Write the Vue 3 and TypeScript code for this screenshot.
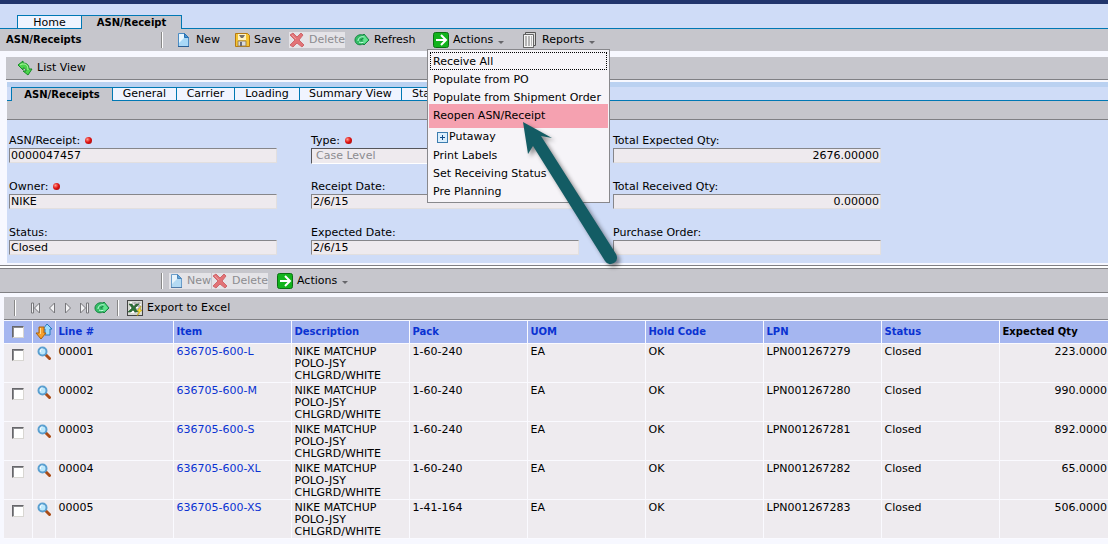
<script setup lang="ts">
import { ref } from 'vue'
import type { FunctionalComponent } from 'vue'
import { h } from 'vue'

interface Line {
  no: string
  item: string
  pack: string
  lpn: string
  qty: string
}

const lines: Line[] = [
  { no: '00001', item: '636705-600-L', pack: '1-60-240', lpn: 'LPN001267279', qty: '223.0000' },
  { no: '00002', item: '636705-600-M', pack: '1-60-240', lpn: 'LPN001267280', qty: '990.0000' },
  { no: '00003', item: '636705-600-S', pack: '1-60-240', lpn: 'LPN001267281', qty: '892.0000' },
  { no: '00004', item: '636705-600-XL', pack: '1-60-240', lpn: 'LPN001267282', qty: '65.0000' },
  { no: '00005', item: '636705-600-XS', pack: '1-41-164', lpn: 'LPN001267283', qty: '506.0000' },
]

const columns = ['Line #', 'Item', 'Description', 'Pack', 'UOM', 'Hold Code', 'LPN', 'Status']
const subTabs = ['General', 'Carrier', 'Loading', 'Summary View', 'Sta']
const selected = ref<string[]>([])

const svg = (size: number, kids: [string, Record<string, string | number>][]) =>
  h('svg', { width: size, height: size, viewBox: '0 0 16 16', 'aria-hidden': 'true' }, kids.map(([t, a]) => h(t, a)))

const NewIcon: FunctionalComponent = () =>
  svg(16, [
    ['path', { d: 'M2.5 1.5h6l4 4v9h-10z', fill: '#a9d8f6', stroke: '#4b8cc4' }],
    ['path', { d: 'M3 2h5v4l-5 5z', fill: '#e9f7ff' }],
    ['path', { d: 'M8.5 1.5v4h4z', fill: '#3f97d8', stroke: '#2b70b0' }],
    ['path', { d: 'M2 14.5h11', stroke: '#2a5f96' }],
  ])
const DeleteIcon: FunctionalComponent = () =>
  svg(16, [
    ['path', { d: 'M1 3l3-2 4 4 4-4 2 2-4 5 5 5-2 2-5-4-4 4-3-2 5-5z', fill: '#e2585c', stroke: '#c9494e', 'stroke-width': 1 }],
    ['path', { d: 'M3 3l4 4', stroke: '#ee8c8c', 'stroke-width': 1 }],
  ])
const RefreshIcon: FunctionalComponent = () =>
  svg(16, [
    ['path', { d: 'M1 8c0-4 4-6 8-5l1-1 5 6-5 5-1-1c-4 2-8 0-8-4z', fill: '#35bd67', stroke: '#168341' }],
    ['path', { d: 'M4 9c0-3 3-5 6-4M5 10c2 1 4 1 6-1', fill: 'none', stroke: '#c5ffe0', 'stroke-width': 1 }],
    ['path', { d: 'M6 8l3-2v3z', fill: '#0f7037' }],
    ['path', { d: 'M10 3l4 5-4 4V9L7 8l3-1z', fill: '#61e48f' }],
  ])
const GoIcon: FunctionalComponent = () =>
  svg(16, [
    ['rect', { x: 0.5, y: 0.5, width: 15, height: 15, rx: 2, fill: '#12b31c', stroke: '#0a6f12' }],
    ['path', { d: 'M3 8h10M8 3l5 5-5 5', fill: 'none', stroke: '#fff', 'stroke-width': 2 }],
  ])
</script>

<template>
  <div class="page">
    <header class="main-tabs">
      <button class="tab home">Home</button>
      <button class="tab current">ASN/Receipt</button>
    </header>

    <div class="toolbar">
      <h1>ASN/Receipts</h1>
      <span class="sep"></span>
      <button class="tool new"><NewIcon />New</button>
      <button class="tool save">
        <svg width="16" height="16" viewBox="0 0 16 16" aria-hidden="true">
          <path d="M1.500 1.500h12l2 2v11h-14z" fill="#f4c331" stroke="#b57a13" />
          <path d="M4 2h8v6H4z" fill="#fff3c2" />
          <path d="M5 3h6l-2 3H7z" fill="#76716b" />
          <path d="M4 9h8v5H4z" fill="#d9dbe0" stroke="#9f8551" />
          <path d="M6 10h2v4H6z" fill="#6a6b78" />
        </svg>Save
      </button>
      <button class="tool del" disabled><DeleteIcon />Delete</button>
      <button class="tool refresh"><RefreshIcon />Refresh</button>
      <div class="actions">
        <button class="tool"><GoIcon />Actions<i class="caret"></i></button>
        <ul class="menu">
          <li class="focused"><button>Receive All</button></li>
          <li><button>Populate from PO</button></li>
          <li class="short"><button>Populate from Shipment Order</button></li>
          <li class="hot"><button>Reopen ASN/Receipt</button></li>
          <li class="nested">
            <button>
              <svg width="11" height="11" viewBox="0 0 11 11" aria-hidden="true">
                <rect x=".5" y=".5" width="10" height="10" fill="#dceffd" stroke="#3d7daf" />
                <path d="M3 5.500h5M5.500 3v5" stroke="#124d8b" />
              </svg>Putaway
            </button>
          </li>
          <li><button>Print Labels</button></li>
          <li><button>Set Receiving Status</button></li>
          <li><button>Pre Planning</button></li>
        </ul>
      </div>
      <button class="tool reports">
        <svg width="16" height="16" viewBox="0 0 16 16" aria-hidden="true">
          <path d="M3.500 .5h10v13h-2v2h-10v-13h2z" fill="#dadada" stroke="#555" />
          <path d="M1.500 2.500h10v13h-10z" fill="#f4f4f4" stroke="#666" />
          <path d="M3 5h7M3 7h7M3 9h7M3 11h7M3 13h7" stroke="#777" stroke-dasharray="2 1" />
        </svg>Reports<i class="caret"></i>
      </button>
    </div>

    <section class="detail">
      <div class="list-bar">
        <button class="tool">
          <svg width="16" height="16" viewBox="0 0 16 16" aria-hidden="true">
            <path d="M1 5l5-4v2c4 0 6 2 6 6h3l-4 6-5-4h3c0-2-1-3-3-3v2z" fill="#4bd34b" stroke="#168b25" />
            <path d="M3 5l2-1h2c3 0 4 3 4 6" fill="none" stroke="#b1f6a4" />
          </svg>List View
        </button>
      </div>
      <div class="panel">
        <nav class="sub-tabs">
          <button class="tab current">ASN/Receipts</button>
          <button v-for="(t, i) in subTabs" :key="t" class="tab" :class="'t' + i">{{ t }}</button>
        </nav>
        <div class="sub-bar"></div>
        <form class="fields" @submit.prevent>
          <div class="field">
            <label for="asn">ASN/Receipt:<i class="req"></i></label>
            <input id="asn" value="0000047457" readonly />
          </div>
          <div class="field">
            <label for="type">Type:<i class="req"></i></label>
            <select id="type" disabled><option>Case Level</option></select>
          </div>
          <div class="field">
            <label for="teq">Total Expected Qty:</label>
            <input id="teq" class="num" value="2676.00000" readonly />
          </div>
          <div class="field">
            <label for="owner">Owner:<i class="req"></i></label>
            <input id="owner" value="NIKE" readonly />
          </div>
          <div class="field">
            <label for="rdate">Receipt Date:</label>
            <input id="rdate" value="2/6/15" readonly />
          </div>
          <div class="field">
            <label for="trq">Total Received Qty:</label>
            <input id="trq" class="num" value="0.00000" readonly />
          </div>
          <div class="field">
            <label for="status">Status:</label>
            <input id="status" value="Closed" readonly />
          </div>
          <div class="field">
            <label for="edate">Expected Date:</label>
            <input id="edate" value="2/6/15" readonly />
          </div>
          <div class="field">
            <label for="po">Purchase Order:</label>
            <input id="po" value="" readonly />
          </div>
        </form>
      </div>
    </section>

    <div class="splitter"></div>

    <div class="toolbar lower">
      <span class="sep"></span>
      <button class="tool new" disabled><NewIcon />New</button>
      <button class="tool del" disabled><DeleteIcon />Delete</button>
      <button class="tool go"><GoIcon />Actions<i class="caret"></i></button>
    </div>

    <section class="grid">
      <div class="grid-bar">
        <span class="sep"></span>
        <div class="pager">
          <button aria-label="First page">
            <svg width="12" height="12" viewBox="0 0 12 12"><path d="M1.500 1v10h2V1zM9.500 1v10L4.500 6z" fill="#f2f2f4" stroke="#77777b" /></svg>
          </button>
          <button aria-label="Previous page">
            <svg width="12" height="12" viewBox="0 0 12 12"><path d="M8.500 1v10L3.500 6z" fill="#f2f2f4" stroke="#77777b" /></svg>
          </button>
          <button aria-label="Next page">
            <svg width="12" height="12" viewBox="0 0 12 12"><path d="M3.500 1v10l5-5z" fill="#f2f2f4" stroke="#77777b" /></svg>
          </button>
          <button aria-label="Last page">
            <svg width="12" height="12" viewBox="0 0 12 12"><path d="M8.500 1v10h2V1zM2.500 1v10l5-5z" fill="#f2f2f4" stroke="#77777b" /></svg>
          </button>
          <button aria-label="Refresh lines"><RefreshIcon /></button>
        </div>
        <span class="sep"></span>
        <button class="tool excel">
          <svg width="16" height="16" viewBox="0 0 16 16" aria-hidden="true">
            <rect x=".5" y=".5" width="15" height="15" fill="#d7d9d3" stroke="#444" />
            <path d="M3 2h11v11H3z" fill="#fff" />
            <path d="M5 3h9M5 6h9M5 9h9M8 2v11M12 2v11" stroke="#999" />
            <path d="M2 4h3l2 3 2-3h3L8 8l3 4H8l-2-2-2 2H1l4-4z" fill="#2d7437" stroke="#18451f" stroke-width=".5" />
            <path d="M14 6l-4 5h2l-2 5 5-6h-2z" fill="#ffe834" stroke="#a4860d" stroke-width=".5" />
          </svg>Export to Excel
        </button>
      </div>

      <table>
        <colgroup>
          <col class="c-check" /><col class="c-icon" />
          <col v-for="c in columns" :key="c" class="c-data" />
          <col />
        </colgroup>
        <thead>
          <tr>
            <th class="mid"><input type="checkbox" aria-label="Select all lines" /></th>
            <th class="mid">
              <svg width="18" height="18" viewBox="0 0 18 18" role="img" aria-label="Sort">
                <path d="M12 1l5 5h-2v6h-5V6H8z" fill="#9cdcff" stroke="#2678bd" />
                <path d="M4 4h5v6h2l-5 6-5-6h3z" fill="#f6a02d" stroke="#a8620e" />
                <path d="M5.500 5v6" stroke="#ffdc94" />
              </svg>
            </th>
            <th v-for="c in columns" :key="c"><a href="#">{{ c }}</a></th>
            <th>Expected Qty</th>
          </tr>
        </thead>
        <tbody>
          <tr v-for="l in lines" :key="l.no">
            <td class="mid"><input v-model="selected" type="checkbox" :value="l.no" :aria-label="'Select line ' + l.no" /></td>
            <td class="mid">
              <svg width="14" height="14" viewBox="0 0 14 14" role="img" aria-label="View line">
                <path d="M8.500 8.500l4 4" stroke="#a94c17" stroke-width="3" stroke-linecap="round" />
                <circle cx="5.500" cy="5.500" r="4" fill="#bce8fc" stroke="#5a9fd0" stroke-width="2" />
                <path d="M3.500 6a2 2 0 0 1 2-3" fill="none" stroke="#fff" />
              </svg>
            </td>
            <td>{{ l.no }}</td>
            <td><a href="#">{{ l.item }}</a></td>
            <td>NIKE MATCHUP<br />POLO-JSY<br />CHLGRD/WHITE</td>
            <td>{{ l.pack }}</td>
            <td>EA</td>
            <td>OK</td>
            <td>{{ l.lpn }}</td>
            <td>Closed</td>
            <td class="num">{{ l.qty }}</td>
          </tr>
        </tbody>
      </table>
    </section>

    <svg class="pointer" width="110" height="156" viewBox="0 0 110 156" aria-hidden="true">
      <path d="M9 8L38 24L27 22L102 140Q105 146 100 149Q94 152 91 147L19 32L14 40Z" fill="#135c64" />
    </svg>
  </div>
</template>

<style>
body {
  background: #f7f8ff;
}
</style>

<style scoped>
.page {
  position: relative;
  border-top: 4px solid #21356c;
  font: 11px/12px "DejaVu Sans", Verdana, sans-serif;
  color: #000;
  overflow: hidden;
}
.page * {
  box-sizing: border-box;
}
button,
input,
select {
  font: inherit;
  color: inherit;
  margin: 0;
  border-radius: 0;
}
button {
  background: none;
  border: 0;
  padding: 0;
  white-space: nowrap;
  text-align: left;
}
svg {
  flex: none;
  display: block;
}

.main-tabs {
  display: flex;
  align-items: flex-end;
  height: 25px;
  padding-left: 17px;
  background: linear-gradient(#0078b4, #0078b4) bottom / 100% 1px no-repeat #cfdcf7;
}
.tab {
  border: 1px solid #0078b4;
  background: #f0f4ff;
  text-align: center;
}
.main-tabs .tab {
  height: 14px;
  line-height: 14px;
}
.main-tabs .home {
  width: 64px;
  border-right: 0;
}
.main-tabs .current {
  width: 101px;
}
.tab.current {
  background: #c6c6cc;
  border-bottom: 0;
  font-weight: bold;
  font-size: 10px;
}

.toolbar {
  display: flex;
  align-items: center;
  height: 22px;
  background: #c6c6cc;
}
h1 {
  margin: 0;
  padding-left: 6px;
  width: 161px;
  font-size: 10px;
  line-height: 14px;
}
.sep {
  width: 2px;
  height: 16px;
  background: #888;
  border-right: 1px solid #fff;
}
.tool {
  display: flex;
  align-items: center;
  gap: 4px;
  height: 16px;
}
.tool:disabled {
  background: #e4e3e7;
  color: #8c8c90;
}
.tool:disabled svg {
  opacity: 0.8;
}
.toolbar .new {
  margin-left: 13px;
  width: 58px;
}
.save {
  width: 55px;
}
.del {
  width: 56px;
}
.refresh {
  width: 79px;
  margin-left: 9px;
}
.actions {
  position: relative;
  width: 89px;
}
.caret {
  margin: 4px 0 0 1px;
  border: 3px solid transparent;
  border-top-color: #66666a;
  border-bottom: 0;
}

.menu {
  position: absolute;
  z-index: 2;
  left: -6px;
  top: 17px;
  width: 183px;
  margin: 0;
  padding: 2px 1px;
  list-style: none;
  background: #f6f4f8;
  border: 1px solid #88888c;
}
.menu li {
  height: 18px;
  padding: 0 4px;
}
.menu button {
  display: flex;
  align-items: center;
  height: 18px;
  padding-top: 2px;
}
.menu .focused {
  margin: 0 1px;
  padding: 0 2px;
  border: 1px dotted #000;
}
.menu .focused button {
  height: 16px;
}
.menu .short {
  height: 16px;
}
.menu .hot {
  height: 24px;
  padding-top: 2px;
  background: #f5a1b0;
}
.menu .nested {
  padding-left: 8px;
}
.menu .nested button {
  gap: 1px;
  padding: 0;
}

.detail {
  padding: 6px 0 2px 6px;
}
.list-bar {
  height: 23px;
  padding: 3px 11px;
  background: #c6c6cc;
  border-bottom: 1px solid #808084;
}
.panel {
  margin: 2px 0 0 1px;
  background: #cfdcf7;
}
.sub-tabs {
  display: flex;
  padding: 0 4px;
  border-top: 5px solid #bad1f1;
  background: linear-gradient(#0078b4, #0078b4) bottom / 100% 1px no-repeat;
}
.sub-tabs .tab {
  height: 14px;
  line-height: 12px;
  padding: 0;
  border-left: 0;
}
.sub-tabs .current {
  width: 102px;
  border-left: 1px solid #0078b4;
}
.t0 {
  width: 64px;
}
.t1 {
  width: 58px;
}
.t2 {
  width: 65px;
}
.t3 {
  width: 102px;
}
.sub-tabs .t4 {
  width: 60px;
  padding-left: 10px;
  text-align: left;
}
.sub-bar {
  height: 19px;
  background: #c6c6cc;
  border-bottom: 1px solid #808084;
}
.fields {
  display: grid;
  grid-template-columns: repeat(3, 268px);
  column-gap: 34px;
  row-gap: 17px;
  padding: 14px 2px 8px;
}
.field {
  display: flex;
  flex-direction: column;
  gap: 1px;
}
.field label {
  display: flex;
  align-items: center;
  height: 13px;
}
.req {
  width: 7px;
  height: 7px;
  margin-left: 5px;
  border-radius: 50%;
  background: radial-gradient(circle at 35% 35%, #ff9a8c, #e01414 45%, #8f0505);
}
.field input,
.field select {
  width: 100%;
  height: 15px;
  padding: 0 1px;
  border: 1px solid #86868a;
  border-right-color: #e2dfdf;
  border-bottom-color: #e2dfdf;
  background: #eeeaee;
  outline: 0;
}
.field select {
  appearance: none;
  height: 16px;
  margin-bottom: -1px;
  padding-left: 4px;
  border-color: #55555a #fff #fff #55555a;
  color: #8c8c90;
  opacity: 1;
}
.num {
  text-align: right;
}

.splitter {
  height: 4px;
  border: 1px solid #808084;
  border-width: 1px 0;
  background: #fff;
}
.lower {
  height: 24px;
  padding-left: 161px;
  border-bottom: 1px solid #808084;
}
.lower .new {
  gap: 2px;
  margin: 0 1px 0 6px;
  width: 42px;
}
.go {
  margin-left: 9px;
}

.grid {
  padding: 4px 0 6px 4px;
}
.grid-bar {
  display: flex;
  align-items: center;
  height: 23px;
  padding-left: 10px;
  background: #c6c6cc;
  border-bottom: 1px solid #808084;
}
.pager {
  display: flex;
  align-items: center;
  gap: 4px;
  margin: 0 7px 0 14px;
}
.excel {
  margin-left: 8px;
}
table {
  width: 100%;
  table-layout: fixed;
  border-collapse: collapse;
  margin-top: 1px;
}
.c-check {
  width: 28px;
}
.c-icon {
  width: 23px;
}
.c-data {
  width: 118px;
}
th,
td {
  padding: 2px 1px 0 3px;
  text-align: left;
  vertical-align: top;
  border-right: 1px solid #fafaff;
  border-bottom: 1px solid #fafaff;
}
th:last-child,
td:last-child {
  border-right: 0;
}
th {
  height: 22px;
  padding-top: 0;
  vertical-align: middle;
  background: #a5b6f0;
  font-size: 10px;
}
td {
  height: 39px;
  background: #eeebef;
}
td.num {
  text-align: right;
}
a {
  color: #0a32d2;
  text-decoration: none;
}
.mid {
  padding-left: 0;
  padding-right: 0;
}
.mid svg,
.mid input {
  display: block;
  margin: 0 auto;
}
td.mid input {
  margin-top: 3px;
}
input[type='checkbox'] {
  appearance: none;
  width: 12px;
  height: 12px;
  background: #fff;
  border: 1px solid #66666a;
  border-right-color: #d8d6d2;
  border-bottom-color: #d8d6d2;
  box-shadow: inset 1px 1px #8c8c90;
}

.pointer {
  position: absolute;
  z-index: 3;
  left: 514px;
  top: 110px;
  filter: drop-shadow(3px 3px 2px #00000070);
  pointer-events: none;
}
</style>
